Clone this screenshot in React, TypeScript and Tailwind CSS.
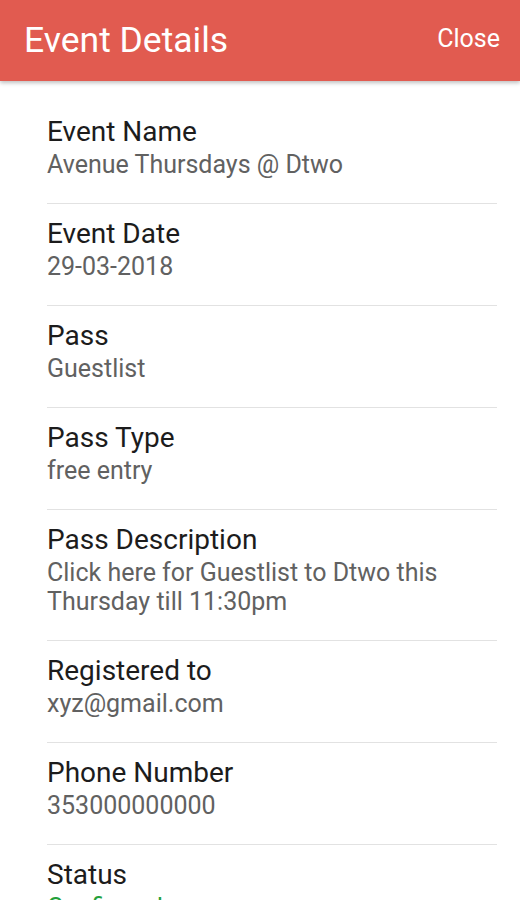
import React from "react";

type Item = { label: string; value: string[]; green?: boolean };

const items: Item[] = [
  { label: "Event Name", value: ["Avenue Thursdays @ Dtwo"] },
  { label: "Event Date", value: ["29-03-2018"] },
  { label: "Pass", value: ["Guestlist"] },
  { label: "Pass Type", value: ["free entry"] },
  { label: "Pass Description", value: ["Click here for Guestlist to Dtwo this", "Thursday till 11:30pm"] },
  { label: "Registered to", value: ["xyz@gmail.com"] },
  { label: "Phone Number", value: ["353000000000"] },
  { label: "Status", value: ["Confirmed"], green: true },
];

export default function App() {
  return (
    <div
      className="w-full h-[900px] overflow-hidden bg-white"
      style={{ fontFamily: "Roboto, 'Noto Sans', sans-serif" }}
    >
      <div className="relative z-10 h-[81px] bg-[#e15b50] flex items-center justify-between pl-[24px] pr-[20px] shadow-[0_2px_4px_rgba(0,0,0,0.25)]">
        <div className="text-white text-[35.5px] leading-[42px] pb-[1px]">Event Details</div>
        <div className="text-white text-[25px] leading-[30px] pb-[3px]">Close</div>
      </div>
      <div className="ml-[47px] mr-[23px] pt-[21px]">
        {items.map((it, i) => (
          <div
            key={it.label}
            className={
              i < items.length - 1
                ? "border-b border-[#e2e2e2] pt-[14px] pb-[24px]"
                : "pt-[14px] pb-[24px]"
            }
          >
            <div className="text-[28px] leading-[32px] text-[#1c1c1c]">{it.label}</div>
            <div
              className={
                it.green
                  ? "mt-[2px] text-[25px] leading-[29px] text-[#23a03a]"
                  : "mt-[2px] text-[25px] leading-[29px] text-[#616161]"
              }
            >
              {it.value.map((v) => (
                <div key={v}>{v}</div>
              ))}
            </div>
          </div>
        ))}
      </div>
    </div>
  );
}
